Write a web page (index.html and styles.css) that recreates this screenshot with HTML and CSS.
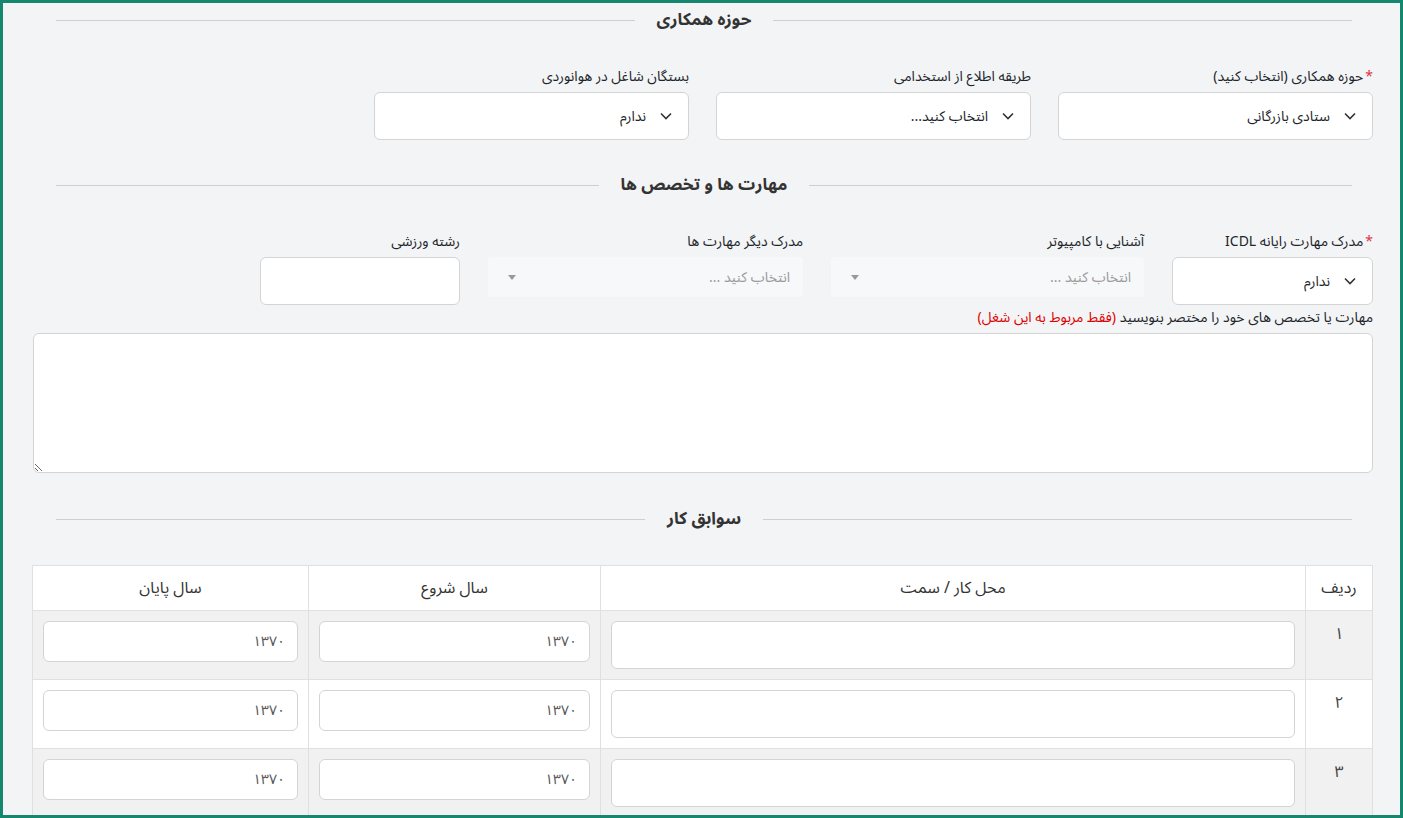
FILE: index.html
```html
<!DOCTYPE html>
<html lang="fa" dir="rtl">
<head>
    <meta charset="UTF-8">
    <meta name="viewport" content="width=device-width, initial-scale=1.0">
    <title>فرم همکاری</title>
    <link rel="stylesheet" href="styles.css">
</head>
<body>

<div class="frame">

    <!-- حوزه همکاری -->
    <div class="section-title"><span>حوزه همکاری</span></div>
    <div class="row row-main">
        <div class="field">
            <label><span class="req">*</span>حوزه همکاری (انتخاب کنید)</label>
            <div class="select">
                <svg class="chevron" viewBox="0 0 12 8"><path d="M1 1.5l5 5 5-5"/></svg>
                <span>ستادی بازرگانی</span>
            </div>
        </div>
        <div class="field">
            <label>طریقه اطلاع از استخدامی</label>
            <div class="select">
                <svg class="chevron" viewBox="0 0 12 8"><path d="M1 1.5l5 5 5-5"/></svg>
                <span>انتخاب کنید...</span>
            </div>
        </div>
        <div class="field">
            <label>بستگان شاغل در هوانوردی</label>
            <div class="select">
                <svg class="chevron" viewBox="0 0 12 8"><path d="M1 1.5l5 5 5-5"/></svg>
                <span>ندارم</span>
            </div>
        </div>
    </div>

    <!-- مهارت ها -->
    <div class="section-title"><span>مهارت ها و تخصص ها</span></div>
    <div class="row row-skills">
        <div class="field">
            <label><span class="req">*</span>مدرک مهارت رایانه ICDL</label>
            <div class="select">
                <svg class="chevron" viewBox="0 0 12 8"><path d="M1 1.5l5 5 5-5"/></svg>
                <span>ندارم</span>
            </div>
        </div>
        <div class="field">
            <label>آشنایی با کامپیوتر</label>
            <div class="select2">
                <span class="placeholder">انتخاب کنید ...</span>
                <span class="caret"></span>
            </div>
        </div>
        <div class="field">
            <label>مدرک دیگر مهارت ها</label>
            <div class="select2">
                <span class="placeholder">انتخاب کنید ...</span>
                <span class="caret"></span>
            </div>
        </div>
        <div class="field">
            <label>رشته ورزشی</label>
            <input type="text" class="input">
        </div>
    </div>

    <div class="field field-wide">
        <label>مهارت یا تخصص های خود را مختصر بنویسید <span class="note">(فقط مربوط به این شغل)</span></label>
        <textarea class="textarea"></textarea>
    </div>

    <!-- سوابق کار -->
    <div class="section-title"><span>سوابق کار</span></div>
    <table class="jobs">
        <colgroup>
            <col class="col-num">
            <col class="col-place">
            <col class="col-year">
            <col class="col-year-end">
        </colgroup>
        <thead>
            <tr>
                <th>ردیف</th>
                <th>محل کار / سمت</th>
                <th>سال شروع</th>
                <th>سال پایان</th>
            </tr>
        </thead>
        <tbody>
            <tr>
                <td class="num">۱</td>
                <td><input type="text" class="input"></td>
                <td><input type="text" class="input year" value="۱۳۷۰"></td>
                <td><input type="text" class="input year" value="۱۳۷۰"></td>
            </tr>
            <tr>
                <td class="num">۲</td>
                <td><input type="text" class="input"></td>
                <td><input type="text" class="input year" value="۱۳۷۰"></td>
                <td><input type="text" class="input year" value="۱۳۷۰"></td>
            </tr>
            <tr>
                <td class="num">۳</td>
                <td><input type="text" class="input"></td>
                <td><input type="text" class="input year" value="۱۳۷۰"></td>
                <td><input type="text" class="input year" value="۱۳۷۰"></td>
            </tr>
        </tbody>
    </table>

</div>

</body>
</html>
```

FILE: styles.css
```css
/* General */
html, body {
    margin: 0;
    padding: 0;
}

body {
    font-family: "Noto Sans Arabic", "Vazirmatn", "DejaVu Sans", sans-serif;
    color: #212529;
    direction: rtl;
}

.frame {
    height: 818px;
    box-sizing: border-box;
    overflow: hidden;
    border: 3px solid #16876f;
    background-color: #f3f4f6;
    padding: 0 27px 0 30px;
}

/* Section titles with lines on both sides */
.section-title {
    display: flex;
    align-items: center;
    height: 34px;
    margin: 0 21px 0 23px;
    font-size: 17px;
    font-weight: bold;
    color: #333;
}

.section-title::before,
.section-title::after {
    content: "";
    flex: 1;
    border-top: 1px solid #cfcfcf;
}

.section-title span {
    padding: 0 22px;
}

/* Form rows */
.row {
    display: grid;
    column-gap: 27px;
    margin-top: 30px;
    align-items: start;
}

.row-main {
    grid-template-columns: repeat(4, 315px);
    margin-bottom: 28px;
}

.row-skills {
    grid-template-columns: 201px 313px 315px 200px;
    column-gap: 28px;
}

.field label {
    display: block;
    font-size: 14px;
    line-height: 20px;
    margin-bottom: 5px;
    white-space: nowrap;
}

.req {
    color: #dc3545;
    margin-left: 2px;
}

.note {
    color: #e00000;
}

/* Select boxes */
.select {
    display: flex;
    align-items: center;
    gap: 14px;
    height: 48px;
    box-sizing: border-box;
    padding: 0 16px;
    background-color: #fff;
    border: 1px solid #d4d4d4;
    border-radius: 6px;
    font-size: 14px;
}

.chevron {
    width: 12px;
    height: 8px;
    fill: none;
    stroke: #333;
    stroke-width: 1.6;
}

/* Disabled select2 style boxes */
.select2 {
    display: flex;
    align-items: center;
    justify-content: space-between;
    height: 40px;
    box-sizing: border-box;
    padding: 0 13px 0 20px;
    background-color: #f7f8f9;
    border-radius: 4px;
    font-size: 14px;
}

.placeholder {
    color: #9a9a9a;
}

.caret {
    width: 0;
    height: 0;
    border-left: 4px solid transparent;
    border-right: 4px solid transparent;
    border-top: 5px solid #999;
}

.input {
    display: block;
    width: 100%;
    height: 48px;
    box-sizing: border-box;
    padding: 0 12px;
    background-color: #fff;
    border: 1px solid #d4d4d4;
    border-radius: 6px;
    font-family: inherit;
    font-size: 14px;
    color: #555;
}

.field-wide {
    margin-top: 3px;
}

.textarea {
    display: block;
    width: 100%;
    height: 140px;
    box-sizing: border-box;
    background-color: #fff;
    border: 1px solid #d4d4d4;
    border-radius: 6px;
    font-family: inherit;
    margin: 0 0 29px 0;
}

/* Work history table */
.jobs {
    width: 100%;
    margin-top: 29px;
    border-collapse: collapse;
    background-color: #fff;
    table-layout: fixed;
}

.col-num { width: 67px; }
.col-place { width: 705px; }
.col-year { width: 292px; }
.col-year-end { width: 276px; }

.jobs th,
.jobs td {
    border: 1px solid #e0e0e0;
    padding: 10px;
    vertical-align: top;
}

.jobs th {
    font-size: 16px;
    font-weight: normal;
    line-height: 24px;
    color: #333;
}

.jobs tbody tr:nth-child(odd) {
    background-color: #f1f1f1;
}

.jobs td.num {
    text-align: center;
    font-size: 16px;
    line-height: 26px;
    color: #444;
}

.jobs .input.year {
    height: 41px;
}
```
